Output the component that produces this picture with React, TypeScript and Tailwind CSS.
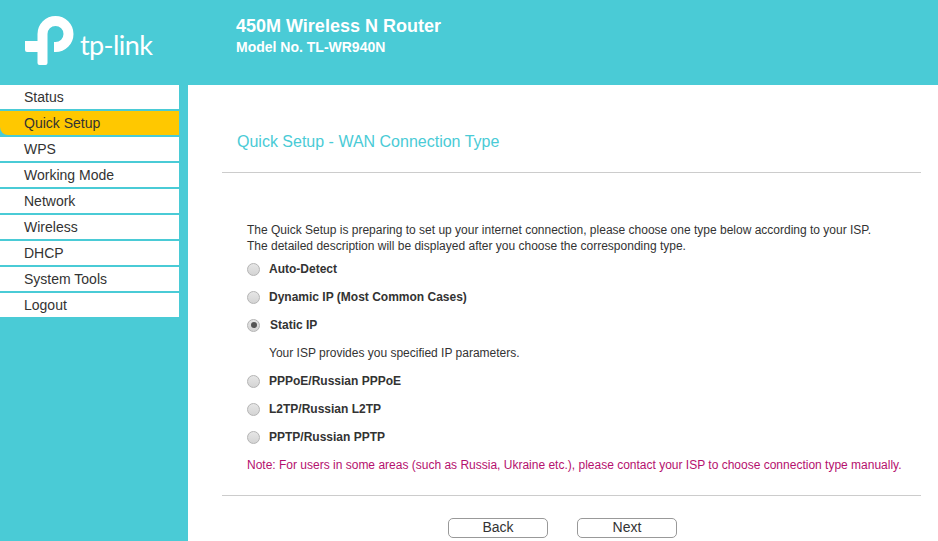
const MENU = ['Status', 'Quick Setup', 'WPS', 'Working Mode', 'Network', 'Wireless', 'DHCP', 'System Tools', 'Logout'];

const TYPES = [
  { label: 'Auto-Detect' },
  { label: 'Dynamic IP (Most Common Cases)' },
  { label: 'Static IP', checked: true, hint: 'Your ISP provides you specified IP parameters.' },
  { label: 'PPPoE/Russian PPPoE' },
  { label: 'L2TP/Russian L2TP' },
  { label: 'PPTP/Russian PPTP' },
];

function Logo() {
  return (
    <svg width="49" height="49" viewBox="0 0 49 49" className="shrink-0">
      <path
        d="M12.5 18 A18 18 0 1 1 30.5 36 H29 V26 H30.5 A8 8 0 1 0 22.5 18 V47 Q22.5 49 20.5 49 H14.5 Q12.5 49 12.5 47 V36 H2 Q0 36 0 34 V25 H12.5 Z"
        fill="#fff"
      />
    </svg>
  );
}

function Radio({ checked }: { checked?: boolean }) {
  return (
    <span className="w-[13px] h-[13px] rounded-full border border-[#b4b4b4] bg-gradient-to-b from-[#e6e6e6] to-[#d4d4d4] flex items-center justify-center shrink-0">
      {checked && <span className="w-[6px] h-[6px] rounded-full bg-[#555]" />}
    </span>
  );
}

export default function App() {
  return (
    <div className="h-screen overflow-hidden flex flex-col bg-[#4acbd6] font-['Liberation_Sans',Arial,sans-serif]">

      {/* header */}
      <header className="h-[85px] shrink-0 flex text-white">
        <div className="w-[236px] shrink-0 pl-[25px] pt-4 flex items-start">
          <Logo />
          <span className="ml-[6px] mt-[13px] text-[27px] leading-[32px] tracking-[-0.6px] font-['Lato',sans-serif]">tp-link</span>
        </div>
        <div className="pt-[15px] font-bold">
          <div className="text-lg leading-[22px]">450M Wireless N Router</div>
          <div className="text-sm leading-[20px]">Model No. TL-WR940N</div>
        </div>
      </header>

      <div className="flex-1 flex min-h-0">
        {/* sidebar */}
        <nav className="w-[188px] shrink-0">
          <ul className="w-[179px] flex flex-col gap-[2px]">
            {MENU.map(m => (
              <li
                key={m}
                className={`h-6 pl-6 text-sm leading-6 text-[#333] ${m === 'Quick Setup' ? 'bg-[#ffc800] rounded-bl-lg' : 'bg-white'}`}
              >
                {m}
              </li>
            ))}
          </ul>
        </nav>

        {/* content */}
        <main className="flex-1 bg-white pl-[34px] pr-[17px] pt-[46px]">
          <h1 className="pl-[15px] text-base leading-[22px] text-[#4acbd6]">Quick Setup - WAN Connection Type</h1>
          <hr className="mt-[19px] border-[#ccc]" />

          <div className="pl-[25px] pt-[49px] text-xs text-[#333]">
            <p className="leading-4">
              The Quick Setup is preparing to set up your internet connection, please choose one type below according to your ISP.
              <br />
              The detailed description will be displayed after you choose the corresponding type.
            </p>
            <div className="mt-[1px]">
              {TYPES.map(t => (
                <div key={t.label}>
                  <label className="h-7 flex items-center gap-[9px]">
                    <Radio checked={t.checked} />
                    <span className={`font-bold ${t.checked ? 'pl-px' : ''}`}>{t.label}</span>
                  </label>
                  {t.hint && <div className="h-7 leading-7 pl-[22px]">{t.hint}</div>}
                </div>
              ))}
            </div>
            <p className="h-7 leading-7 text-[#b5106e]">
              Note: For users in some areas (such as Russia, Ukraine etc.), please contact your ISP to choose connection type manually.
            </p>
          </div>

          <hr className="mt-4 border-[#ccc]" />

          <div className="mt-[22px] flex gap-[29px] pl-[226px]">
            <button className="w-[100px] h-5 rounded-[5px] border border-[#999] bg-white text-sm leading-[16px] pb-[2px] text-[#333]">Back</button>
            <button className="w-[100px] h-5 rounded-[5px] border border-[#999] bg-white text-sm leading-[16px] pb-[2px] text-[#333]">Next</button>
          </div>
        </main>
      </div>
    </div>
  );
}
